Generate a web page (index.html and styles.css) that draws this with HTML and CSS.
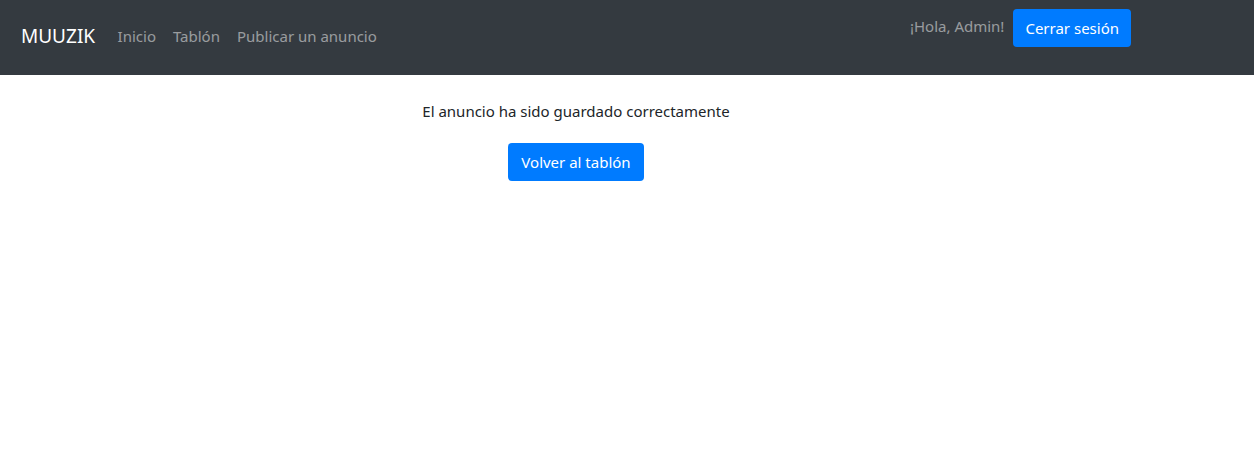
FILE: index.html
```html
<!DOCTYPE html>
<html lang="es">
<head>
<meta charset="utf-8">
<title>MUUZIK</title>
<link rel="stylesheet" href="styles.css">
</head>
<body>
<nav class="navbar">
  <div class="nav-left">
    <a class="brand" href="#">MUUZIK</a>
    <ul class="nav-links">
      <li><a href="#">Inicio</a></li>
      <li><a href="#">Tablón</a></li>
      <li><a href="#">Publicar un anuncio</a></li>
    </ul>
  </div>
  <div class="nav-right">
    <span class="greeting">¡Hola, Admin!</span>
    <button class="btn">Cerrar sesión</button>
  </div>
</nav>
<main class="content">
  <p class="message">El anuncio ha sido guardado correctamente</p>
  <a class="btn btn-back" href="#">Volver al tablón</a>
</main>
</body>
</html>
```
FILE: styles.css
```css
* { box-sizing: border-box; }
body {
  margin: 0;
  font-family: "Noto Sans", "Open Sans", sans-serif;
  font-size: 15px;
  line-height: 24px;
  color: #212529;
  background: #fff;
}
.navbar {
  height: 75px;
  background: #343a40;
  display: flex;
  justify-content: space-between;
  align-items: flex-start;
  padding: 0 123px 0 21px;
}
.nav-left {
  display: flex;
  align-items: center;
  height: 75px;
  padding-bottom: 3px;
}
.brand {
  color: #fff;
  font-size: 19px;
  text-decoration: none;
  margin-right: 14px;
}
.nav-links {
  display: flex;
  list-style: none;
  margin: 0;
  padding: 0;
}
.nav-links a {
  display: block;
  padding: 0 8.5px;
  color: rgba(255,255,255,0.5);
  text-decoration: none;
}
.nav-right {
  display: flex;
  align-items: center;
  gap: 9px;
  margin-top: 9px;
}
.greeting {
  color: rgba(255,255,255,0.5);
  margin-top: -4px;
}
.btn {
  display: inline-block;
  background: #007bff;
  color: #fff;
  border: none;
  border-radius: 4px;
  font-family: inherit;
  font-size: 15px;
  line-height: 24px;
  padding: 7px 12px;
  height: 38px;
  text-decoration: none;
  cursor: pointer;
}
.btn-back {
  padding: 7px 13px;
}
.content {
  width: 1152px;
  display: flex;
  flex-direction: column;
  align-items: center;
  padding-top: 24px;
}
.message {
  margin: 0 0 20px;
}
```
